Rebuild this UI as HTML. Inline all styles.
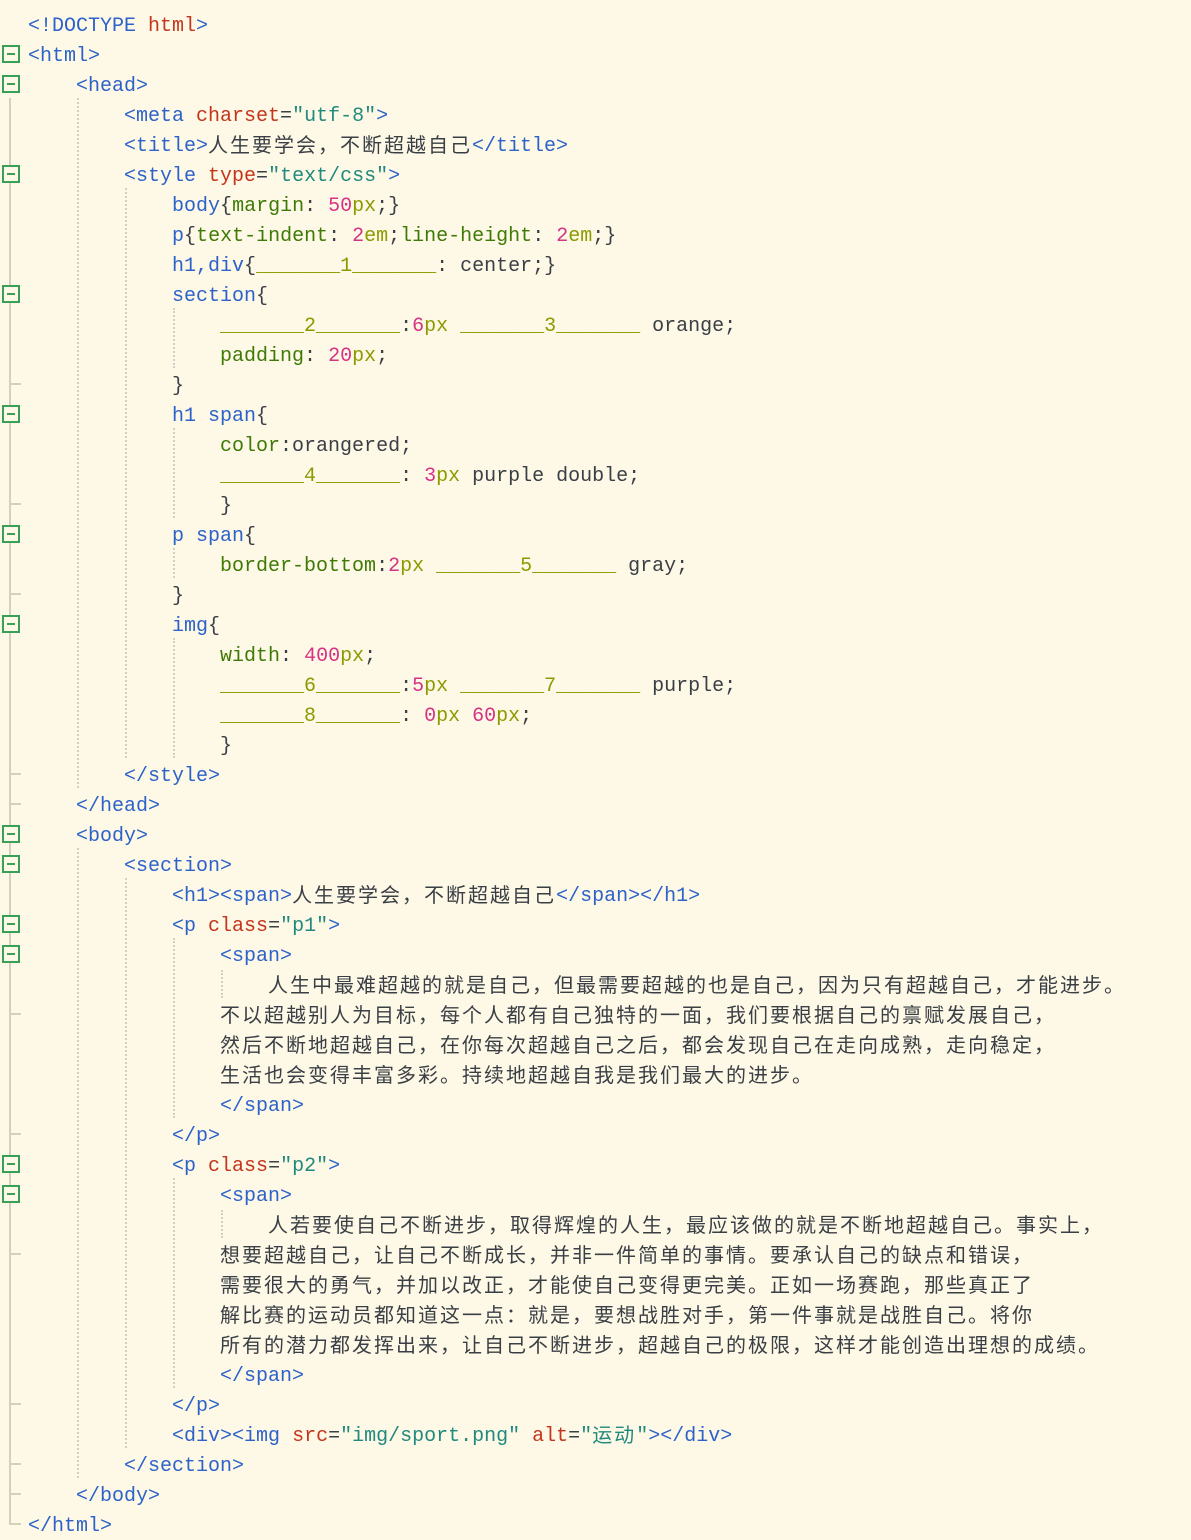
<!DOCTYPE html>
<html><head><meta charset="utf-8"><style>
html,body{margin:0;padding:0;background:#fef8e6;width:1191px;height:1540px;overflow:hidden;position:relative}
pre{position:absolute;left:28px;top:12px;margin:0;font-family:"Liberation Mono","Noto Sans CJK SC",monospace;font-size:20px;line-height:30px;color:#3a3f45;white-space:pre}
.t{color:#2c62c9}.a{color:#c4351b}.s{color:#1f8a7d}.k{color:#3f7a06}.n{color:#d63384}.u{color:#8c9a00}.c{color:#3a3f45}
.zh{font-family:"Noto Sans CJK SC",sans-serif;letter-spacing:2px;display:inline-block;height:30px;line-height:30px;vertical-align:top;overflow:visible;position:relative;top:-3px}
.box{position:absolute;left:2px;width:14px;height:14px;border:2px solid #3aa058;background:#fef8e6}
.box:after{content:"";position:absolute;left:3px;top:6px;width:8px;height:2px;background:#3aa058}
.vl{position:absolute;left:9px;width:2px;background:#d4d0bc}
.tk{position:absolute;left:9px;width:12px;height:2px;background:#d4d0bc}
.dg{position:absolute;width:0;border-left:2px dotted #cfcfc8}
</style></head><body>
<div class="vl" style="top:98px;height:1426px"></div>
<div class="tk" style="top:383px"></div><div class="tk" style="top:503px"></div><div class="tk" style="top:593px"></div>
<div class="tk" style="top:773px"></div><div class="tk" style="top:803px"></div><div class="tk" style="top:1013px"></div>
<div class="tk" style="top:1133px"></div><div class="tk" style="top:1253px"></div><div class="tk" style="top:1403px"></div>
<div class="tk" style="top:1463px"></div><div class="tk" style="top:1493px"></div><div class="tk" style="top:1523px"></div>
<div class="box" style="top:45px"></div><div class="box" style="top:75px"></div><div class="box" style="top:165px"></div>
<div class="box" style="top:285px"></div><div class="box" style="top:405px"></div><div class="box" style="top:525px"></div>
<div class="box" style="top:615px"></div><div class="box" style="top:825px"></div><div class="box" style="top:855px"></div>
<div class="box" style="top:915px"></div><div class="box" style="top:945px"></div><div class="box" style="top:1155px"></div>
<div class="box" style="top:1185px"></div>
<div class="dg" style="left:77px;top:98px;height:690px"></div>
<div class="dg" style="left:77px;top:848px;height:630px"></div>
<div class="dg" style="left:125px;top:188px;height:570px"></div>
<div class="dg" style="left:125px;top:878px;height:570px"></div>
<div class="dg" style="left:173px;top:308px;height:60px"></div>
<div class="dg" style="left:173px;top:428px;height:90px"></div>
<div class="dg" style="left:173px;top:548px;height:30px"></div>
<div class="dg" style="left:173px;top:638px;height:120px"></div>
<div class="dg" style="left:173px;top:938px;height:180px"></div>
<div class="dg" style="left:173px;top:1178px;height:210px"></div>
<div class="dg" style="left:221px;top:970px;height:28px"></div>
<div class="dg" style="left:221px;top:1210px;height:28px"></div>
<pre><span class="t">&lt;!DOCTYPE </span><span class="a">html</span><span class="t">&gt;</span>
<span class="t">&lt;html&gt;</span>
    <span class="t">&lt;head&gt;</span>
        <span class="t">&lt;meta </span><span class="a">charset</span>=<span class="s">"utf-8"</span><span class="t">&gt;</span>
        <span class="t">&lt;title&gt;</span><span class="zh">人生要学会，不断超越自己</span><span class="t">&lt;/title&gt;</span>
        <span class="t">&lt;style </span><span class="a">type</span>=<span class="s">"text/css"</span><span class="t">&gt;</span>
            <span class="t">body</span>{<span class="k">margin</span>: <span class="n">50</span><span class="u">px</span>;}
            <span class="t">p</span>{<span class="k">text-indent</span>: <span class="n">2</span><span class="u">em</span>;<span class="k">line-height</span>: <span class="n">2</span><span class="u">em</span>;}
            <span class="t">h1,div</span>{<span class="u">_______1_______</span>: center;}
            <span class="t">section</span>{
                <span class="u">_______2_______</span>:<span class="n">6</span><span class="u">px</span> <span class="u">_______3_______</span> orange;
                <span class="k">padding</span>: <span class="n">20</span><span class="u">px</span>;
            }
            <span class="t">h1 span</span>{
                <span class="k">color</span>:orangered;
                <span class="u">_______4_______</span>: <span class="n">3</span><span class="u">px</span> purple double;
                }
            <span class="t">p span</span>{
                <span class="k">border-bottom</span>:<span class="n">2</span><span class="u">px</span> <span class="u">_______5_______</span> gray;
            }
            <span class="t">img</span>{
                <span class="k">width</span>: <span class="n">400</span><span class="u">px</span>;
                <span class="u">_______6_______</span>:<span class="n">5</span><span class="u">px</span> <span class="u">_______7_______</span> purple;
                <span class="u">_______8_______</span>: <span class="n">0</span><span class="u">px</span> <span class="n">60</span><span class="u">px</span>;
                }
        <span class="t">&lt;/style&gt;</span>
    <span class="t">&lt;/head&gt;</span>
    <span class="t">&lt;body&gt;</span>
        <span class="t">&lt;section&gt;</span>
            <span class="t">&lt;h1&gt;&lt;span&gt;</span><span class="zh">人生要学会，不断超越自己</span><span class="t">&lt;/span&gt;&lt;/h1&gt;</span>
            <span class="t">&lt;p </span><span class="a">class</span>=<span class="s">"p1"</span><span class="t">&gt;</span>
                <span class="t">&lt;span&gt;</span>
                    <span class="zh">人生中最难超越的就是自己，但最需要超越的也是自己，因为只有超越自己，才能进步。</span>
                <span class="zh">不以超越别人为目标，每个人都有自己独特的一面，我们要根据自己的禀赋发展自己，</span>
                <span class="zh">然后不断地超越自己，在你每次超越自己之后，都会发现自己在走向成熟，走向稳定，</span>
                <span class="zh">生活也会变得丰富多彩。持续地超越自我是我们最大的进步。</span>
                <span class="t">&lt;/span&gt;</span>
            <span class="t">&lt;/p&gt;</span>
            <span class="t">&lt;p </span><span class="a">class</span>=<span class="s">"p2"</span><span class="t">&gt;</span>
                <span class="t">&lt;span&gt;</span>
                    <span class="zh">人若要使自己不断进步，取得辉煌的人生，最应该做的就是不断地超越自己。事实上，</span>
                <span class="zh">想要超越自己，让自己不断成长，并非一件简单的事情。要承认自己的缺点和错误，</span>
                <span class="zh">需要很大的勇气，并加以改正，才能使自己变得更完美。正如一场赛跑，那些真正了</span>
                <span class="zh">解比赛的运动员都知道这一点：就是，要想战胜对手，第一件事就是战胜自己。将你</span>
                <span class="zh">所有的潜力都发挥出来，让自己不断进步，超越自己的极限，这样才能创造出理想的成绩。</span>
                <span class="t">&lt;/span&gt;</span>
            <span class="t">&lt;/p&gt;</span>
            <span class="t">&lt;div&gt;&lt;img </span><span class="a">src</span>=<span class="s">"img/sport.png"</span> <span class="a">alt</span>=<span class="s">"<span class="zh">运动</span>"</span><span class="t">&gt;&lt;/div&gt;</span>
        <span class="t">&lt;/section&gt;</span>
    <span class="t">&lt;/body&gt;</span>
<span class="t">&lt;/html&gt;</span></pre>
</body></html>
